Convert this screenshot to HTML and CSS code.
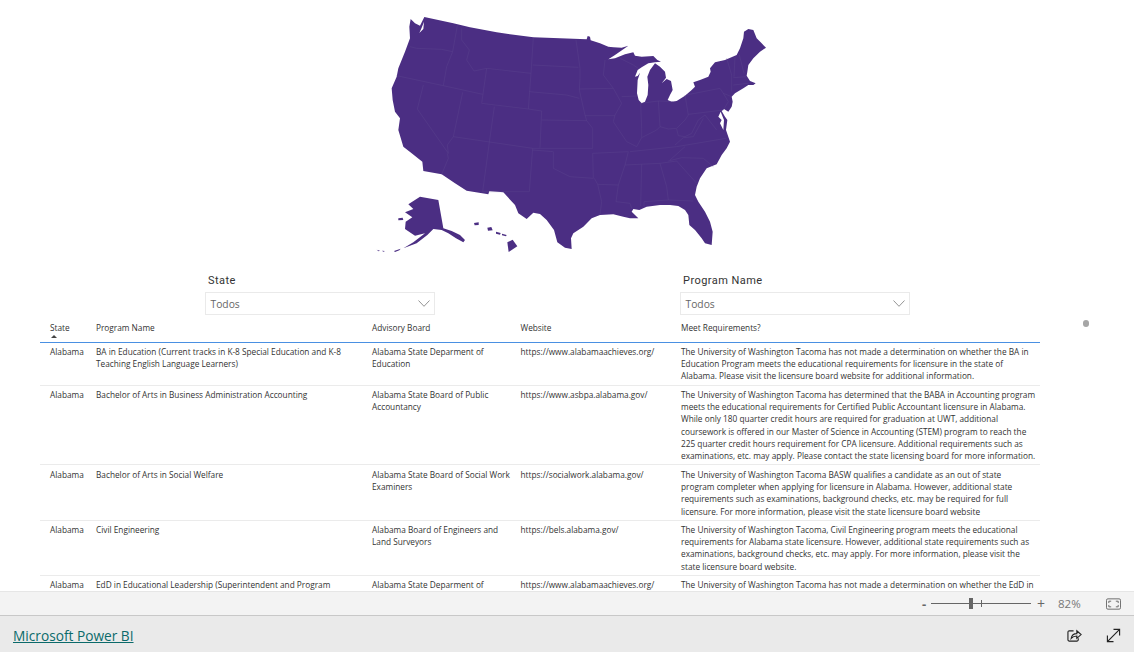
FILE: index.html
```html
<!DOCTYPE html>
<html lang="en">
<head>
<meta charset="utf-8">
<title>Microsoft Power BI</title>
<link rel="stylesheet" href="styles.css">
</head>
<body>
<main class="report">
  <div class="map-wrap">
    <svg class="map" viewBox="0 0 1200 765" aria-label="Map of the United States">
      <g class="land">
        <path d="M122 42L135 55L150 62L163 36L250 55L300 67L380 82L490 97L650 103L653 93L660 95L662 106L690 115L715 125L730 127L755 128L775 122L760 133L735 150L715 163L735 160L765 148L790 142L795 152L815 155L850 153L862 165L873 170L855 172L835 175L815 187L803 195L795 215L803 213L810 203L803 225L801 265L806 285L815 295L825 290L833 270L835 240L832 215L840 195L855 175L870 185L885 200L888 218L875 235L890 222L903 228L908 255L900 270L893 285L905 290L920 288L945 272L965 255L975 245L970 232L990 225L1015 215L1022 200L1020 190L1035 172L1065 165L1100 150L1110 130L1120 100L1122 80L1135 72L1150 75L1160 100L1175 115L1188 128L1170 140L1150 160L1135 180L1132 200L1130 212L1140 228L1157 235L1150 240L1135 240L1120 250L1095 265L1085 275L1088 290L1085 305L1075 320L1062 312L1055 318L1065 335L1072 345L1068 375L1080 410L1070 430L1055 450L1040 478L1010 490L990 520L980 545L975 570L985 590L1005 620L1020 650L1028 680L1025 720L1005 715L995 700L975 675L958 660L955 630L945 615L925 603L900 600L870 600L830 605L808 615L790 612L785 620L805 640L780 640L760 635L730 628L690 630L665 640L640 665L610 685L603 700L605 732L585 728L562 712L552 675L530 645L510 627L490 623L470 642L445 625L435 600L400 562L358 558L355 568L290 557L255 535L215 508L160 498L157 470L125 445L100 425L85 375L90 340L75 320L68 285L65 250L80 215L85 190L105 140L120 100L118 65Z"/>
        <path d="M115 598L150 575L205 585L220 670L245 678L270 690L285 705L280 712L258 700L235 685L215 675L190 672L172 690L140 715L100 730L130 712L165 685L135 692L105 672L107 650L127 637L105 622L130 612Z"/>
        <path d="M85 640L98 638L100 645L85 646Z"/>
        <path d="M312 654L326 652L326 660L314 661Z"/>
        <path d="M352 668L364 666L368 676L354 677Z"/>
        <path d="M378 680L392 684L390 689L378 686Z"/>
        <path d="M396 686L410 690L408 694L396 691Z"/>
        <path d="M412 712L428 704L442 724L416 741Z"/>
        <path d="M72 738L92 731L88 736L75 741Z"/>
        <path d="M20 734L30 737L26 739ZM36 737L45 738L40 740Z"/>
      </g>
      <path class="water" d="M1052 320L1045 335L1055 345L1050 355L1060 375L1062 345ZM148 84L155 68L162 50L160 72Z"/>
      <path class="borders" d="M120 125L140 130L215 133L248 140M262 62L248 140L230 185L220 242M275 70L275 105L298 135L290 165L312 198L350 190L483 205M490 97L483 205L475 312M488 180L625 187M80 212L220 242L338 268M350 190L335 295L475 312L515 318L510 428M160 240L142 312L235 445L232 420L250 395L278 262M232 445L235 460L215 508M250 395L488 430L668 430M373 305L358 412L338 560L478 560L488 430M478 260L590 270L628 280M515 345L650 347L668 370L668 430M618 105L630 190L630 220L628 255L645 330L650 347M705 165L700 210L730 250L755 295L735 330L730 350L770 410L800 425M628 252L730 250M645 332L735 332M755 275L800 273M750 160L790 180L805 190M812 295L815 370L815 398M812 295L865 288L910 290M865 288L870 365M800 425L815 398L860 375L870 365L895 372L920 370L945 345L955 330L945 270M780 440L920 425L1068 400M668 445L775 440L765 480L745 540L683 538L673 520M488 435L550 440L550 490L600 515L670 520L668 445M683 538L695 590L690 630M745 540L738 590L780 595L785 610M815 478L812 603M870 475L890 545L895 585L822 590L822 605M870 475L920 468L980 535M895 585L970 588M765 480L870 475M895 468L935 458L1000 460L1030 485M900 465L945 425M915 420L940 398L970 395L1000 340M920 372L925 392L945 395L965 385L985 345L1005 330L1040 375M955 328L1060 315M948 270L1050 250L1060 265L1075 290L1060 315M1060 265L1085 275M1070 160L1085 210L1085 260M1095 155L1092 215M1108 150L1122 205M1090 218L1130 215M1090 240L1135 235"/>
    </svg>
  </div>

  <div class="slicers">
    <section class="slicer">
      <h2 class="slicer-title">State</h2>
      <div class="select"><span>Todos</span>
        <svg class="chevron" viewBox="0 0 12 7"><path d="M.5.5L6 6.3 11.5.5"/></svg>
      </div>
    </section>
    <section class="slicer">
      <h2 class="slicer-title">Program Name</h2>
      <div class="select"><span>Todos</span>
        <svg class="chevron" viewBox="0 0 12 7"><path d="M.5.5L6 6.3 11.5.5"/></svg>
      </div>
    </section>
  </div>

  <div class="table">
    <div class="row head">
      <div class="state-head">State<span class="sort"></span></div><div>Program Name</div><div>Advisory Board</div><div>Website</div><div>Meet Requirements?</div>
    </div>
    <div class="row r1">
      <div>Alabama</div>
      <div>BA in Education (Current tracks in K-8 Special Education and K-8<br>Teaching English Language Learners)</div>
      <div>Alabama State Deparment of<br>Education</div>
      <div>https://www.alabamaachieves.org/</div>
      <div>The University of Washington Tacoma has not made a determination on whether the BA in<br>Education Program meets the educational requirements for licensure in the state of<br>Alabama. Please visit the licensure board website for additional information.</div>
    </div>
    <div class="row r2">
      <div>Alabama</div>
      <div>Bachelor of Arts in Business Administration Accounting</div>
      <div>Alabama State Board of Public<br>Accountancy</div>
      <div>https://www.asbpa.alabama.gov/</div>
      <div>The University of Washington Tacoma has determined that the BABA in Accounting program<br>meets the educational requirements for Certified Public Accountant licensure in Alabama.<br>While only 180 quarter credit hours are required for graduation at UWT, additional<br>coursework is offered in our Master of Science in Accounting (STEM) program to reach the<br>225 quarter credit hours requirement for CPA licensure. Additional requirements such as<br>examinations, etc. may apply. Please contact the state licensing board for more information.</div>
    </div>
    <div class="row r3">
      <div>Alabama</div>
      <div>Bachelor of Arts in Social Welfare</div>
      <div>Alabama State Board of Social Work<br>Examiners</div>
      <div>https://socialwork.alabama.gov/</div>
      <div>The University of Washington Tacoma BASW qualifies a candidate as an out of state<br>program completer when applying for licensure in Alabama. However, additional state<br>requirements such as examinations, background checks, etc. may be required for full<br>licensure. For more information, please visit the state licensure board website</div>
    </div>
    <div class="row r4">
      <div>Alabama</div>
      <div>Civil Engineering</div>
      <div>Alabama Board of Engineers and<br>Land Surveyors</div>
      <div>https://bels.alabama.gov/</div>
      <div>The University of Washington Tacoma, Civil Engineering program meets the educational<br>requirements for Alabama state licensure. However, additional state requirements such as<br>examinations, background checks, etc. may apply. For more information, please visit the<br>state licensure board website.</div>
    </div>
    <div class="row r5">
      <div>Alabama</div>
      <div>EdD in Educational Leadership (Superintendent and Program</div>
      <div>Alabama State Deparment of</div>
      <div>https://www.alabamaachieves.org/</div>
      <div>The University of Washington Tacoma has not made a determination on whether the EdD in</div>
    </div>
  </div>
  <span class="scroll-dot"></span>
</main>

<div class="zoombar">
  <span class="minus">-</span>
  <div class="slider"><span class="tick"></span><span class="thumb"></span></div>
  <span class="plus">+</span>
  <span class="percent">82%</span>
  <svg class="fit" viewBox="0 0 16 12"><rect x=".5" y=".5" width="15" height="11" rx="1.5"/><path d="M3 5V3h2.500M13 5V3h-2.500M3 7v2h2.500M13 7v2h-2.500"/></svg>
</div>

<footer class="footer">
  <a class="brand" href="#">Microsoft Power BI</a>
  <div class="actions">
    <svg class="icon" viewBox="0 0 16 16"><path d="M7 3H2.500A1.500 1.500 0 0 0 1 4.500v8A1.500 1.500 0 0 0 2.500 14h8a1.500 1.500 0 0 0 1.500-1.500V11"/><path d="M4.500 11c.5-3 2.500-5 6-5V3l4.500 4-4.500 4V8.500c-2.500 0-4.500 .8-6 2.500z"/></svg>
    <svg class="icon" viewBox="0 0 16 16"><path d="M1.500 14.500L14.500 1.500M8 1.500h6.500V8M1.500 8v6.500H8"/></svg>
  </div>
</footer>
</body>
</html>
```
FILE: styles.css
```css
html, body { margin: 0; padding: 0; }
body {
  width: 1134px;
  height: 652px;
  overflow: hidden;
  background: #fff;
  font-family: "Open Sans", "Liberation Sans", sans-serif;
  color: #333;
}
.report {
  position: relative;
  height: 591px;
  overflow: hidden;
}
.map-wrap {
  height: 268px;
  padding: 5px 0 0 370px;
  box-sizing: border-box;
}
.map { display: block; width: 400px; height: 255px; }
.land { fill: #4b2e83; }
.water { fill: #fff; }
.borders { fill: none; stroke: #5f4791; stroke-width: 1.1; }

.slicers {
  display: flex;
  gap: 245px;
  padding-left: 205px;
  height: 53px;
}
.slicer { width: 230px; }
.slicer-title {
  margin: 0;
  padding: 6px 0 0 3px;
  font: 400 11px/14px Roboto, sans-serif;
  letter-spacing: .45px;
  color: #333;
  height: 18px;
}
.select {
  display: flex;
  align-items: center;
  justify-content: space-between;
  box-sizing: border-box;
  height: 23px;
  padding: 0 4px 0 4.500px;
  border: 1px solid #eaeaea;
  font-size: 10.300px;
  color: #666;
}
.select span { padding-top: 1px; }
.chevron { width: 12px; height: 7px; fill: none; stroke: #888; stroke-width: .9; }

.table { width: 1000px; margin-left: 40px; }
.row {
  display: grid;
  grid-template-columns: 46px 276px 148.500px 160.500px 1fr;
  padding-left: 10px;
  box-sizing: border-box;
  font-size: 8.280px;
  line-height: 12.200px;
  white-space: nowrap;
  border-bottom: 1px solid #ebebeb;
  padding-top: 3px;
}
.head { height: 22px; border-bottom: 1px solid #4a90e2; padding-top: 1px; }
.state-head { position: relative; }
.sort {
  position: absolute;
  left: 1px;
  top: 13px;
  border: 3px solid transparent;
  border-top: 0;
  border-bottom: 3px solid #444;
}
.r1 { height: 43px; }
.r2 { height: 79px; }
.r3 { height: 56px; padding-top: 4px; }
.r4 { height: 55px; }
.r5 { height: 20px; border-bottom: 0; }
.scroll-dot {
  position: absolute;
  left: 1083px;
  top: 320px;
  width: 6px;
  height: 7px;
  border-radius: 3px;
  background: #a6a6a6;
}

.zoombar {
  display: flex;
  align-items: center;
  box-sizing: border-box;
  height: 25px;
  padding-left: 922px;
  background: #f3f3f3;
  border-top: 1px solid #e6e6e6;
  border-bottom: 1px solid #c8c8c8;
  color: #666;
}
.minus { width: 9px; font-size: 13px; font-weight: 700; }
.slider {
  position: relative;
  width: 100px;
  height: 1px;
  background: #666;
}
.thumb {
  position: absolute;
  left: 38px;
  top: -5px;
  width: 4px;
  height: 11px;
  background: #666;
}
.tick {
  position: absolute;
  left: 50px;
  top: -3px;
  width: 1px;
  height: 7px;
  background: #666;
}
.plus { margin-left: 6px; width: 21px; font-size: 14px; }
.percent { width: 48px; font-size: 11.500px; color: #777; }
.fit { width: 15px; height: 12px; fill: none; stroke: #666; stroke-width: 1; }

.footer {
  display: flex;
  align-items: center;
  justify-content: space-between;
  height: 36px;
  padding: 2px 13px 0;
  box-sizing: border-box;
  background: #eaeaea;
}
.brand {
  font-size: 13.700px;
  font-weight: 500;
  color: #0b6a6a;
}
.actions { display: flex; gap: 24px; }
.icon { width: 15px; height: 15px; fill: none; stroke: #222; stroke-width: 1.2; }
```
